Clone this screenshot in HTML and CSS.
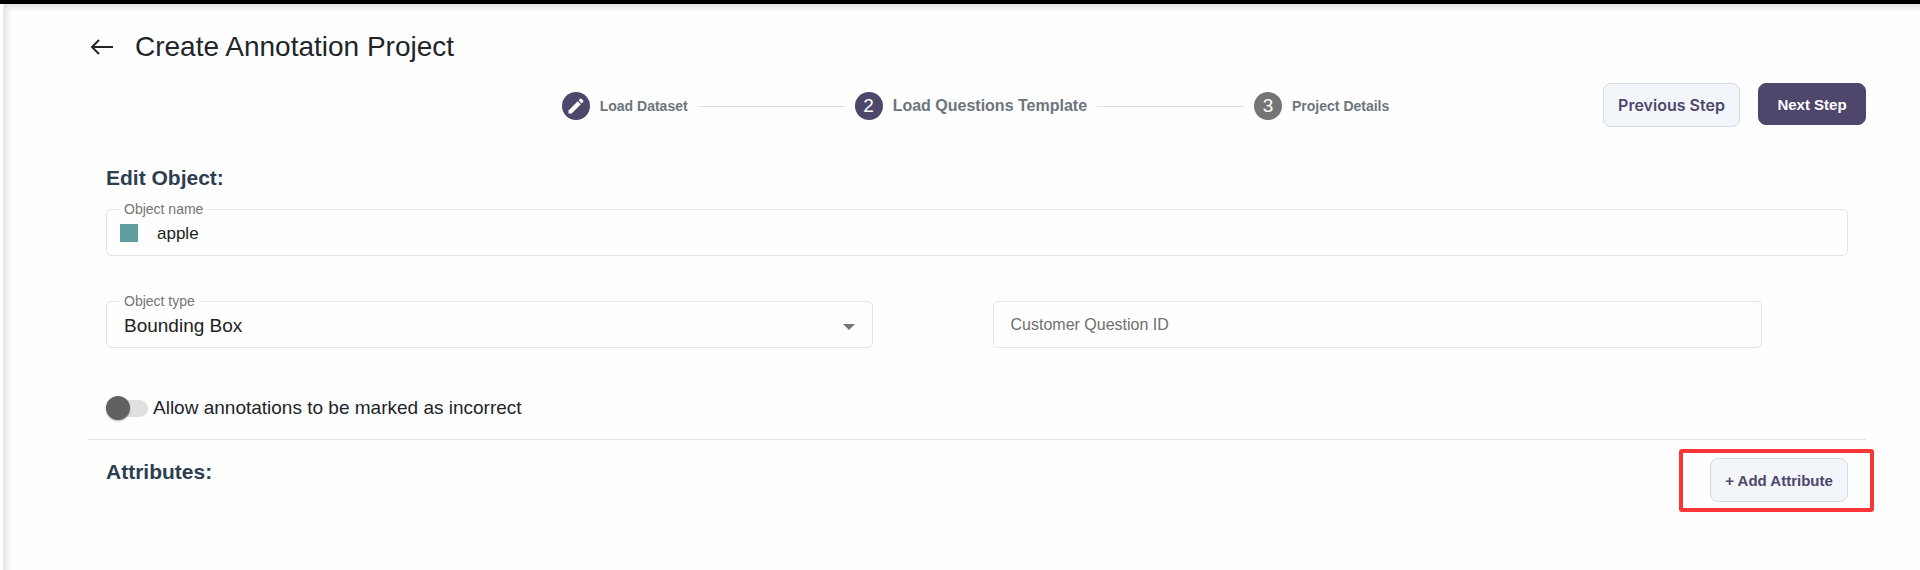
FILE: index.html
```
<!DOCTYPE html>
<html lang="en">
<head>
    <meta charset="UTF-8">
    <meta name="viewport" content="width=device-width, initial-scale=1.0">
    <title>Create Annotation Project</title>
    <link rel="stylesheet" href="styles.css">
</head>
<body>
    <div class="page">
        <header class="page-header">
            <a href="#" class="back-link" aria-label="Back">
                <svg width="24" height="18" viewBox="0 0 24 18" fill="none" stroke="currentColor" stroke-width="2">
                    <path d="M23 9H2M9 2L2 9L9 16"/>
                </svg>
            </a>
            <h1>Create Annotation Project</h1>
        </header>

        <div class="toolbar">
            <ol class="stepper">
                <li class="step">
                    <span class="step-icon">
                        <svg width="20" height="20" viewBox="0 0 24 24" fill="currentColor">
                            <path d="M3 17.25V21h3.75L17.81 9.94l-3.75-3.75L3 17.25zM20.71 7.04a1 1 0 0 0 0-1.41l-2.34-2.34a1 1 0 0 0-1.41 0l-1.83 1.83 3.75 3.75 1.83-1.83z"/>
                        </svg>
                    </span>
                    <span class="step-label">Load Dataset</span>
                </li>
                <li class="step-line"></li>
                <li class="step active">
                    <span class="step-icon">2</span>
                    <span class="step-label">Load Questions Template</span>
                </li>
                <li class="step-line"></li>
                <li class="step pending">
                    <span class="step-icon">3</span>
                    <span class="step-label">Project Details</span>
                </li>
            </ol>
            <div class="toolbar-actions">
                <button type="button" class="btn btn-previous">Previous Step</button>
                <button type="button" class="btn btn-next">Next Step</button>
            </div>
        </div>

        <form class="object-form">
            <h2>Edit Object:</h2>
            <div class="field">
                <label for="object-name">Object name</label>
                <span class="color-swatch"></span>
                <input type="text" id="object-name" name="object_name" value="apple">
            </div>
            <div class="field-row">
                <div class="field">
                    <label for="object-type">Object type</label>
                    <select id="object-type" name="object_type">
                        <option>Bounding Box</option>
                    </select>
                    <svg class="select-arrow" width="12" height="6" viewBox="0 0 12 6" fill="currentColor">
                        <path d="M0 0H12L6 6z"/>
                    </svg>
                </div>
                <div class="field">
                    <input type="text" id="question-id" name="question_id" placeholder="Customer Question ID" aria-label="Customer Question ID">
                </div>
            </div>
            <div class="switch-row">
                <input type="checkbox" class="switch" id="allow-incorrect" name="allow_incorrect">
                <label for="allow-incorrect">Allow annotations to be marked as incorrect</label>
            </div>
        </form>

        <section class="attributes">
            <h2>Attributes:</h2>
            <div class="highlight">
                <button type="button" class="btn btn-add">+ Add Attribute</button>
            </div>
        </section>
    </div>
</body>
</html>
```
FILE: styles.css
```
* {
    box-sizing: border-box;
}
body {
    margin: 0;
    font-family: "Liberation Sans", Arial, sans-serif;
    color: #212529;
    background-color: #fefefe;
    border-top: 4px solid #000;
}
.page {
    min-height: calc(100vh - 4px);
    margin-left: 3px;
    padding: 23px 54px 0 84px;
    border-left: 1px solid #ececec;
    box-shadow: inset 5px 5px 7px -3px rgba(0, 0, 0, 0.14);
}
h1, h2 {
    margin: 0;
}
h1 {
    font-size: 28px;
    line-height: 40px;
    font-weight: normal;
}
h2 {
    font-size: 21px;
    line-height: 24px;
    color: #2c3e50;
}
.page-header {
    display: flex;
    align-items: center;
    gap: 21px;
    padding-left: 2px;
}
.back-link {
    display: flex;
    color: #212529;
}

/* stepper and buttons */
.toolbar {
    display: flex;
    align-items: center;
    margin-top: 16px;
}
.stepper {
    flex: 1;
    display: flex;
    align-items: center;
    justify-content: center;
    gap: 10px;
    margin: 0;
    padding: 2px 0 0 260px;
    list-style: none;
}
.step {
    display: flex;
    align-items: center;
    gap: 10px;
}
.step-icon {
    display: flex;
    align-items: center;
    justify-content: center;
    width: 28px;
    height: 28px;
    border-radius: 50%;
    background-color: #4e476b;
    color: #fff;
    font-size: 19px;
}
.step-label {
    font-size: 14px;
    font-weight: bold;
    color: #6c757d;
    white-space: nowrap;
}
.step.active .step-label {
    font-size: 16px;
}
.step.pending .step-icon {
    background-color: #757575;
}
.step-line {
    width: 147px;
    height: 1px;
    background-color: #e0e0e0;
}
.toolbar-actions {
    display: flex;
    align-items: flex-start;
    gap: 18px;
}
.btn {
    height: 44px;
    padding: 0;
    border: 1px solid #d5dadd;
    border-radius: 8px;
    background-color: #f2f6fa;
    color: #4e476b;
    font-family: "Liberation Sans", Arial, sans-serif;
    font-size: 15px;
    font-weight: bold;
    cursor: pointer;
}
.btn-previous {
    width: 137px;
    font-family: Inter, sans-serif;
    font-size: 16px;
    font-weight: 600;
}
.btn-next {
    width: 108px;
    height: 42px;
    border-color: #4e476b;
    background-color: #4e476b;
    color: #fff;
}
.btn-add {
    width: 138px;
}

/* form */
.object-form {
    padding: 39px 18px 0;
}
.field {
    position: relative;
    flex: 1;
    display: flex;
    align-items: center;
    height: 47px;
    padding: 0 13px;
    border: 1px solid #e4e4e4;
    border-radius: 5px;
}
.field label {
    position: absolute;
    top: -9px;
    left: 13px;
    padding: 0 6px 0 4px;
    background-color: #fefefe;
    color: #757575;
    font-size: 14px;
    line-height: 16px;
}
.object-form h2 + .field {
    margin-top: 19px;
}
.field input, .field select {
    width: 100%;
    padding: 0;
    border: none;
    outline: none;
    background: none;
    color: #212121;
    font-family: "Liberation Sans", Arial, sans-serif;
    font-size: 16px;
    line-height: 24px;
}
.field input::placeholder {
    color: #6f6f6f;
    opacity: 1;
}
.field #object-name {
    padding-top: 3px;
    font-size: 17px;
}
.field select {
    appearance: none;
    padding-top: 3px;
    padding-left: 3px;
    font-size: 19px;
}
.field-row .field {
    padding: 0 17px;
}
.field-row .field:first-child {
    padding-left: 14px;
}
.color-swatch {
    flex: none;
    width: 18px;
    height: 18px;
    margin-right: 19px;
    background-color: #5f9ea0;
}
.select-arrow {
    flex: none;
    margin-top: 4px;
    color: #757575;
}
.field-row {
    display: flex;
    gap: 120px;
    margin-top: 45px;
    padding-right: 86px;
}
.switch-row {
    display: flex;
    align-items: center;
    gap: 5px;
    margin-top: 47px;
    font-size: 19px;
    line-height: 26px;
}
.switch {
    appearance: none;
    display: flex;
    align-items: center;
    width: 42px;
    height: 17px;
    margin: 0;
    border-radius: 9px;
    background-color: #e0e0e0;
    cursor: pointer;
}
.switch::before {
    content: "";
    width: 24px;
    height: 24px;
    flex: none;
    border-radius: 50%;
    background-color: #616161;
    box-shadow: 0 1px 2px rgba(0, 0, 0, 0.3);
}
.switch:checked {
    justify-content: flex-end;
}

/* attributes */
.attributes {
    display: flex;
    justify-content: space-between;
    align-items: flex-start;
    margin-top: 18px;
    padding: 18px 18px 0;
    border-top: 1px solid #e4e4e4;
}
.attributes h2 {
    margin-top: 2px;
}
.highlight {
    position: relative;
}
.highlight::after {
    content: "";
    position: absolute;
    inset: -9px -26px -10px -31px;
    border: 4px solid #f93535;
    border-radius: 3px;
    pointer-events: none;
}
```
